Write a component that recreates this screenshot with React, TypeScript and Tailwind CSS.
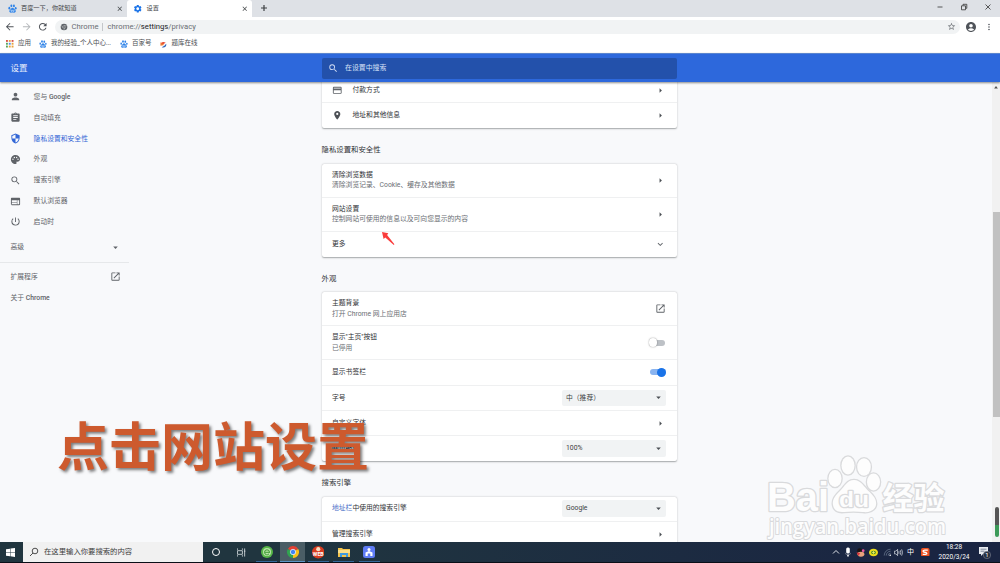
import type { ReactNode } from "react";
import type { IconType } from "react-icons";
import {
  MdAccountCircle,
  MdArrowBack,
  MdArrowDropDown,
  MdArrowForward,
  MdArrowRight,
  MdAssignment,
  MdClose,
  MdCreditCard,
  MdExpandMore,
  MdMoreVert,
  MdOpenInNew,
  MdPalette,
  MdPerson,
  MdPlace,
  MdPowerSettingsNew,
  MdRefresh,
  MdSearch,
  MdSecurity,
  MdSettings,
  MdStarBorder,
  MdWeb,
} from "react-icons/md";

const navItems: { icon: IconType; label: ReactNode; active?: boolean }[] = [
  { icon: MdPerson, label: <>您与 <span className="font-medium">Google</span></> },
  { icon: MdAssignment, label: "自动填充" },
  { icon: MdSecurity, label: "隐私设置和安全性", active: true },
  { icon: MdPalette, label: "外观" },
  { icon: MdSearch, label: "搜索引擎" },
  { icon: MdWeb, label: "默认浏览器" },
  { icon: MdPowerSettingsNew, label: "启动时" },
];

function Paw({ className = "" }: { className?: string }) {
  return (
    <svg viewBox="0 0 24 24" className={`shrink-0 text-[#2d82e8] ${className}`} fill="currentColor">
      <ellipse cx="9" cy="4.8" rx="2.6" ry="3.8" />
      <ellipse cx="15.8" cy="5" rx="2.6" ry="3.6" />
      <ellipse cx="3.6" cy="11" rx="2.5" ry="3.4" />
      <ellipse cx="20.6" cy="11.4" rx="2.4" ry="3.3" />
      <path d="M12 10c-3 0-4 3.4-6.600 5.400C1.500 19 4 23.500 8 23c2.600-.4 5.400-.4 8 0 4.500.6 6.500-4 3-7.600C16.200 13 15 10 12 10z" />
      <path d="M8 15.500v4h2.500v-4M13 15.500v4h3v-4" fill="none" stroke="#fff" strokeWidth="1.300" />
    </svg>
  );
}

function TabStrip() {
  return (
    <div className="flex h-[17px] bg-[#dee1e6] text-[6.2px] text-[#3c4043]">
      <div className="flex items-center w-[127px] pl-[8px] pr-[4px]">
        <Paw className="size-[9px]" />
        <span className="ml-[4px] flex-1">百度一下，你就知道</span>
        <MdClose className="size-[7.500px]" />
      </div>
      <div className="flex items-center w-[125px] pl-[6px] pr-[4px] rounded-t-[3px] bg-white">
        <MdSettings className="size-[9.500px] text-[#1a73e8]" />
        <span className="ml-[4px] flex-1">设置</span>
        <MdClose className="size-[7.500px]" />
      </div>
      <svg viewBox="0 0 8 8" className="ml-[8px] mt-[4px] size-[8px]" stroke="#3c4043" strokeWidth="1.200">
        <path d="M4 1v6M1 4h6" />
      </svg>
      <svg viewBox="0 0 60 14" className="ml-auto mr-[5px] h-[14px] w-[60px]" fill="none" stroke="#333" strokeWidth="0.8">
        <path d="M2.500 7h5M50.500 4.500l5 5M55.500 4.500l-5 5" />
        <path d="M26.500 5.800h4v4h-4zM28 5.500V4.300h3.800v4H31" />
      </svg>
    </div>
  );
}

function Toolbar() {
  return (
    <div className="flex items-center h-[19px] pl-[4px] pr-[6px] bg-white text-[#50545a]">
      <MdArrowBack className="size-[11.500px]" />
      <MdArrowForward className="ml-[5px] size-[11.500px] text-[#b5b8bb]" />
      <MdRefresh className="ml-[5px] size-[11.500px]" />
      <div className="flex items-center ml-[6px] w-[905px] h-[14px] pl-[5px] pr-[4px] rounded-full bg-[#f1f3f4] text-[7.700px] text-[#6a6e73]">
        <svg viewBox="0 0 24 24" className="size-[8px]">
          <circle cx="12" cy="12" r="10" fill="#5f6368" />
          <circle cx="12" cy="12" r="4" fill="#5f6368" stroke="#f1f3f4" strokeWidth="1" />
          <path d="M12 8h9M8.500 14L4 6.500M15.500 14L11 21.500" stroke="#f1f3f4" strokeWidth="1" />
        </svg>
        <span className="ml-[4px]">Chrome</span>
        <span className="mx-[4px] h-[8px] w-px bg-[#c4c7ca]" />
        <span className="flex-1">
          chrome://<span className="text-[#202124]">settings</span>/privacy
        </span>
        <MdStarBorder className="size-[9px]" />
      </div>
      <MdAccountCircle className="ml-[5.500px] size-[12px]" />
      <MdMoreVert className="ml-auto size-[10px]" />
    </div>
  );
}

function Bookmarks() {
  const dots = ["#d9534a", "#e8a33c", "#d9534a", "#58a55c", "#4b8bf0", "#e8a33c", "#58a55c", "#e8a33c", "#e8a33c"];
  return (
    <div className="flex items-center h-[17px] pb-[1px] pl-[6px] bg-white text-[6.500px] text-[#4b4e52]">
      <svg viewBox="0 0 8 8" className="size-[7.500px]">
        {dots.map((c, i) => (
          <rect key={i} x={(i % 3) * 3} y={Math.floor(i / 3) * 3} width="2" height="2" fill={c} />
        ))}
      </svg>
      <span className="ml-[4.500px]">应用</span>
      <Paw className="ml-[8px] size-[8px]" />
      <span className="ml-[4px] w-[60px] whitespace-nowrap">我的经验_个人中心...</span>
      <Paw className="ml-[9px] size-[8px]" />
      <span className="ml-[4px]">百家号</span>
      <svg viewBox="0 0 8 8" className="ml-[8px] size-[7px]">
        <path d="M1 4C1 1 4 .5 6.500 2L4 3.500z" fill="#e8452c" />
        <path d="M.5 1.500v4L5 4.500z" fill="#ef7a35" />
        <path d="M7 3.200c1 3-2 5.200-5 3.800l3-1.500z" fill="#2b62b8" />
      </svg>
      <span className="ml-[5px]">题库在线</span>
    </div>
  );
}

function Header() {
  return (
    <div className="relative z-10 flex items-center h-[29px] bg-[#2d68dc] border-t border-[#5a85cf] text-[#e8effc] shadow-[0_1px_2px_rgba(0,0,0,0.45)]">
      <div className="w-[321.500px] pt-[1px] pl-[10.500px] text-[8.500px]">设置</div>
      <div className="flex items-center w-[355px] h-[21px] pl-[6.500px] rounded-[2px] bg-[#2351ab] text-[6.900px] text-[#d5e0f6]">
        <MdSearch className="size-[10.500px]" />
        <span className="ml-[6.500px]">在设置中搜索</span>
      </div>
    </div>
  );
}

function Sidebar() {
  return (
    <div className="w-[321.500px] shrink-0 pt-[4.500px] text-[6.800px] text-[#5f6368]">
      {navItems.map(({ icon: Icon, label, active }, i) => (
        <div key={i} className={`flex items-center h-[20.850px] pl-[10.300px] ${active ? "text-[#3367d6]" : ""}`}>
          <Icon className="size-[11px]" />
          <span className="ml-[12.300px]">{label}</span>
        </div>
      ))}
      <div className="flex items-center justify-between mt-[5px] w-[120.500px] h-[20px] pl-[10.500px]">
        高级
        <MdArrowDropDown className="size-[11px]" />
      </div>
      <div className="mt-[4.500px] mb-[3.500px] w-[129px] h-px bg-[#e6e8ea]" />
      <div className="flex items-center justify-between w-[120.500px] h-[20.850px] pl-[10.500px]">
        扩展程序
        <MdOpenInNew className="size-[11px]" />
      </div>
      <div className="flex items-center h-[20.850px] pl-[10.500px]">
        <span>关于 <span className="font-medium">Chrome</span></span>
      </div>
    </div>
  );
}

const card = "rounded-[2px] bg-white shadow-[0_0.5px_1.5px_rgba(60,64,67,0.45)] divide-y divide-[#eff0f1]";

function Row({ title, sub, icon, end, className = "h-[25.500px]" }: { title: ReactNode; sub?: string; icon?: ReactNode; end: ReactNode; className?: string }) {
  return (
    <div className={`flex items-center pl-[10.500px] pr-[11px] text-[6.800px] leading-[10.500px] text-[#303236] ${className}`}>
      {icon}
      <div className="flex-1">
        <div>{title}</div>
        {sub && <div className="text-[#6a6e73]">{sub}</div>}
      </div>
      {end}
    </div>
  );
}

const arrow = <MdArrowRight className="size-[11px] text-[#4c5055]" />;
const openNew = <MdOpenInNew className="size-[11px] text-[#5f6368]" />;

function Select({ children }: { children: ReactNode }) {
  return (
    <div className="flex items-center justify-between w-[104px] h-[16.500px] pl-[4.500px] pr-[1.500px] rounded-[2px] bg-[#f1f3f4] text-[#3c4043]">
      {children}
      <MdArrowDropDown className="size-[11px] text-[#4c5055]" />
    </div>
  );
}

function Toggle({ on }: { on?: boolean }) {
  return on ? (
    <div className="flex items-center justify-end w-[16px] h-[6px] rounded-full bg-[#8ab4f0]">
      <div className="size-[8.500px] shrink-0 rounded-full bg-[#1a73e8]" />
    </div>
  ) : (
    <div className="flex items-center mr-[1px] w-[16px] h-[6px] rounded-full bg-[#bdc1c6]">
      <div className="size-[8.500px] shrink-0 rounded-full bg-white shadow-[0_0_1.5px_rgba(0,0,0,0.5)]" />
    </div>
  );
}

function Heading({ children }: { children: ReactNode }) {
  return <div className="h-[35.500px] pt-[14px] text-[7.400px] leading-[15px] text-[#303236]">{children}</div>;
}

function Settings() {
  return (
    <div className="-mt-[4.500px] w-[355px] shrink-0">
      <div className={card}>
        <Row className="h-[25px] pt-[1.500px]" icon={<MdCreditCard className="mr-[10px] size-[10.500px] text-[#5f6368]" />} title="付款方式" end={arrow} />
        <Row icon={<MdPlace className="mr-[10px] size-[10.500px] text-[#4c5055]" />} title="地址和其他信息" end={arrow} />
      </div>
      <Heading>隐私设置和安全性</Heading>
      <div className={card}>
        <Row className="h-[34px]" title="清除浏览数据" sub="清除浏览记录、Cookie、缓存及其他数据" end={arrow} />
        <Row className="h-[34px]" title="网站设置" sub="控制网站可使用的信息以及可向您显示的内容" end={arrow} />
        <Row className="h-[25px]" title="更多" end={<MdExpandMore className="size-[10.500px] text-[#5f6368]" />} />
      </div>
      <Heading>外观</Heading>
      <div className={card}>
        <Row className="h-[34px]" title="主题背景" sub="打开 Chrome 网上应用店" end={openNew} />
        <Row className="h-[34px]" title="显示&quot;主页&quot;按钮" sub="已停用" end={<Toggle />} />
        <Row title="显示书签栏" end={<Toggle on />} />
        <Row title="字号" end={<Select>中（推荐）</Select>} />
        <Row className="h-[25px]" title="自定义字体" end={arrow} />
        <Row className="h-[25px]" title="网页缩放" end={<Select>100%</Select>} />
      </div>
      <Heading>搜索引擎</Heading>
      <div className={card}>
        <Row className="h-[25px]" title={<><span className="text-[#4a70c8]">地址栏</span>中使用的搜索引擎</>} end={<Select>Google</Select>} />
        <Row title="管理搜索引擎" end={arrow} />
      </div>
    </div>
  );
}

function Scrollbar() {
  return (
    <div className="flex flex-col items-center ml-auto w-[8px] bg-[#f1f1f1]">
      <svg viewBox="0 0 6 4" className="mt-[4px] h-[2.500px] w-[4px]">
        <path d="M0 4l3-4 3 4z" fill="#505050" />
      </svg>
      <div className="mt-[123.500px] h-[205px] w-[7px] bg-[#c1c1c1]" />
    </div>
  );
}

function Watermark() {
  return (
    <svg viewBox="0 0 190 100" className="absolute left-[762px] top-[452px] h-[100px] w-[190px]" fill="#fdfdfd" stroke="#d9dadc" strokeWidth="2.600" paintOrder="stroke" strokeLinejoin="round">
      <ellipse cx="73" cy="26.500" rx="6.500" ry="8.500" />
      <ellipse cx="86" cy="13.500" rx="6.500" ry="9" />
      <ellipse cx="102" cy="15" rx="6.800" ry="8.700" />
      <ellipse cx="111.500" cy="30" rx="6.500" ry="8.500" />
      <path d="M92 28c-7 0-9 6-14 11-5 4.500-8 9-7 14 1 6 6 7.500 11 7 6-.8 13-.8 19 0 6 .8 12-1.500 13-7 .8-5-2-9-7-13.500C102 35 99 28 92 28z" />
      <text x="5" y="59" fontSize="40" fontWeight="700" fontFamily="Liberation Sans, sans-serif" textLength="62" lengthAdjust="spacingAndGlyphs">Bai</text>
      <text x="77" y="55" fontSize="22" fontWeight="700" fontFamily="Liberation Sans, sans-serif" textLength="30" lengthAdjust="spacingAndGlyphs">du</text>
      <text x="120.500" y="57" fontSize="31" fontWeight="700" fontFamily="Noto Sans CJK SC, sans-serif">经验</text>
      <text x="7" y="82" fontSize="22" fontWeight="600" strokeWidth="2.200" fontFamily="Open Sans, sans-serif" textLength="177" lengthAdjust="spacingAndGlyphs">jingyan.baidu.com</text>
    </svg>
  );
}

function Taskbar() {
  const app = "flex flex-col items-center w-[25.600px] pt-[4px]";
  const line = "mt-auto h-[1.500px] w-[21px] bg-[#34699a]";
  return (
    <div className="flex h-[21px] bg-linear-to-r from-[#20353f] from-30% to-[#1a2542] to-90% border-b border-[#0a0f18] text-white">
      <div className="flex items-center w-[23px] pl-[6px]">
        <svg viewBox="0 0 10 10" className="size-[9px]" fill="#fff">
          <path d="M0 1.400l4.500-.7v4H0zM5 .6l5-.6v4.700H5zM0 5.200h4.500v4L0 8.500zM5 5.200h5V10l-5-.7z" />
        </svg>
      </div>
      <div className="flex items-center w-[180px] pl-[6px] bg-[#f1f1f1] text-[7.350px] text-[#3c3c3c]">
        <svg viewBox="0 0 10 10" className="size-[10px]" fill="none" stroke="#3c3c3c" strokeWidth="0.900">
          <circle cx="6" cy="4" r="2.800" />
          <path d="M4 6L1 9" />
        </svg>
        <span className="ml-[5px]">在这里输入你要搜索的内容</span>
      </div>
      <div className="flex">
        <div className={app}>
          <div className="mt-[2px] size-[8px] rounded-full border-[1.400px] border-white" />
        </div>
        <div className={app}>
          <svg viewBox="0 0 10 10" className="mt-[1.500px] size-[9px]" fill="none" stroke="#dfe5e8" strokeWidth="0.900">
            <path d="M.5 3h5.500v4H.5zM.5 .5V2M6 .5V2M.5 8v1.500M6 8v1.500M8.500 .5v9M7.800 3.500h1.500" />
          </svg>
        </div>
        <div className={app}>
          <svg viewBox="0 0 12 12" className="size-[12px]">
            <circle cx="6" cy="6" r="6" fill="#57b648" />
            <circle cx="6" cy="6" r="4" fill="#b9e4a8" />
            <path d="M9 6.300H3.500a2.500 2.500 0 0 1 5 0M3.500 6.500a2.500 2.500 0 0 0 4.500 1.300" fill="none" stroke="#3f9c34" strokeWidth="1" />
          </svg>
          <div className={line} />
        </div>
        <div className={`${app} bg-[#4a5d65]`}>
          <svg viewBox="0 0 12 12" className="size-[12px]">
            <path d="M6 6L.8 3a6 6 0 0 1 10.400 0z" fill="#e34133" />
            <path d="M6 6L.8 3A6 6 0 0 0 6 12z" fill="#31a350" />
            <path d="M6 6l5.200-3A6 6 0 0 1 6 12z" fill="#fbc116" />
            <circle cx="6" cy="6" r="2.700" fill="#4285f4" stroke="#fff" strokeWidth="0.700" />
          </svg>
          <div className="mt-auto h-[1.500px] w-full bg-[#5b94c4]" />
        </div>
        <div className={app}>
          <svg viewBox="0 0 12 12" className="size-[12.500px]">
            <circle cx="6" cy="6" r="6" fill="#d93c20" />
            <circle cx="6" cy="3" r="2" fill="#f8dfc0" />
            <text x="6" y="9.600" fontSize="5" fontWeight="700" textAnchor="middle" fill="#fff">WEB</text>
          </svg>
          <div className={line} />
        </div>
        <div className={app}>
          <svg viewBox="0 0 12 12" className="size-[12px]">
            <path d="M0 2h4l1 1h7v8H0z" fill="#f4c44c" />
            <path d="M0 4h12v3H0z" fill="#fbe08b" />
            <path d="M2 11V7h8v4H8V9H4v2z" fill="#3f9be0" />
          </svg>
          <div className={line} />
        </div>
        <div className={app}>
          <svg viewBox="0 0 12 12" className="size-[12px]">
            <rect width="12" height="12" rx="2.500" fill="#5f7cf5" />
            <circle cx="6" cy="3.400" r="1.500" fill="#fff" />
            <path d="M2.500 10V6.500L6 5l3.500 1.500V10H7.300V7.500H4.700V10z" fill="#fff" />
          </svg>
          <div className={line} />
        </div>
      </div>
      <div className="flex items-center ml-auto pr-[9px]">
        <svg viewBox="0 0 8 8" className="size-[8px]" fill="none" stroke="#dfe3ea">
          <path d="M1 5.500l3-3 3 3" />
        </svg>
        <svg viewBox="0 0 10 10" className="ml-[3.500px] size-[10px]" fill="#fff">
          <rect x="3.200" y="0.500" width="3.600" height="6" rx="1.500" />
          <path d="M2.500 5.500c0 3 5 3 5 0V7L5.800 8v1.500H4.200V8L2.500 7z" />
        </svg>
        <svg viewBox="0 0 10 10" className="ml-[3px] size-[9px]">
          <circle cx="4" cy="3" r="2.700" fill="#1b1414" />
          <ellipse cx="5.500" cy="7" rx="3.800" ry="2.700" fill="#e8a27c" />
          <path d="M.5 5l4 .5L3 9z" fill="#e0303c" />
          <circle cx="8" cy="3" r="1.500" fill="#e957a0" />
        </svg>
        <svg viewBox="0 0 10 10" className="ml-[3.500px] size-[9px]">
          <ellipse cx="5" cy="5" rx="5" ry="4.200" fill="#e9dc1c" />
          <ellipse cx="5" cy="5" rx="2.800" ry="2" fill="#4a8f2c" />
          <path d="M5 3.500v3M3.500 5h3" stroke="#f4ee60" strokeWidth="1" fill="none" />
        </svg>
        <svg viewBox="0 0 10 10" className="ml-[5px] size-[8px]" fill="none" stroke="#66738a">
          <path d="M1.500 9.500a8 8 0 0 1 8-8M4 9.500A5.500 5.500 0 0 1 9.500 4M6.500 9.500a3 3 0 0 1 3-3" />
          <circle cx="9" cy="9" r="1" fill="#fff" stroke="none" />
        </svg>
        <svg viewBox="0 0 10 10" className="ml-[3px] size-[9px]" fill="none" stroke="#dfe3ea" strokeWidth="0.800">
          <path d="M.5 3.500h1.500L4 1.500v7L2 6.500H.5zM5.500 3.500v3M7 2.500q1.200 2.500 0 5M8.500 1.500q2 3.500 0 7" />
        </svg>
        <span className="ml-[4.500px] text-[7px]">中</span>
        <svg viewBox="0 0 10 10" className="ml-[7px] size-[8.500px]">
          <rect width="10" height="10" rx="2" fill="#ee5222" />
          <path d="M8 2.500H4.500C1.500 2.500 2 5 4.500 5s3.500 2.500.5 2.500H2" fill="none" stroke="#fff" strokeWidth="1.500" />
        </svg>
        <div className="ml-[9px] w-[31px] text-center text-[6.500px] leading-[10px]">
          <div>18:28</div>
          <div>2020/3/24</div>
        </div>
        <svg viewBox="0 0 13 13" className="ml-[8.500px] size-[13px]">
          <path d="M1 1h9v7H5L3 10V8H1z" fill="#e8ebf0" />
          <path d="M2.500 3.200h6M2.500 5.200h4" stroke="#55607a" strokeWidth="0.700" />
          <circle cx="9" cy="9" r="3.700" fill="#2a3140" stroke="#8a93a5" strokeWidth="0.500" />
          <text x="9" y="11.300" fontSize="6" textAnchor="middle" fill="#fff">1</text>
        </svg>
      </div>
    </div>
  );
}

export default function App() {
  return (
    <div className="relative flex flex-col w-[1000px] h-[563px] overflow-hidden bg-[#f8f9fb] font-['Roboto','Noto_Sans_CJK_SC',sans-serif]">
      <TabStrip />
      <Toolbar />
      <Bookmarks />
      <Header />
      <div className="flex h-[460px] overflow-hidden">
        <Sidebar />
        <Settings />
        <Scrollbar />
      </div>
      <Taskbar />
      <svg viewBox="0 0 14 16" className="absolute left-[381px] top-[231px] h-[16px] w-[14px]">
        <path d="M1 1l6.300 1.300-1.200 1.600 7.300 9.300-.6.900L4.300 6.600 2.600 8z" fill="#fa3c3c" />
      </svg>
      <div className="absolute left-[57px] top-[423px] whitespace-nowrap text-[52px] leading-[52px] font-bold text-[#cd5a2e] [text-shadow:2px_2px_3px_rgba(0,0,0,0.5)]">
        点击网站设置
      </div>
      <Watermark />
      <div className="absolute left-[995px] top-[507px] h-[30px] w-[4px] rounded-full bg-linear-to-b from-[#555] from-60% to-[#3c9a58] to-60%" />
    </div>
  );
}
